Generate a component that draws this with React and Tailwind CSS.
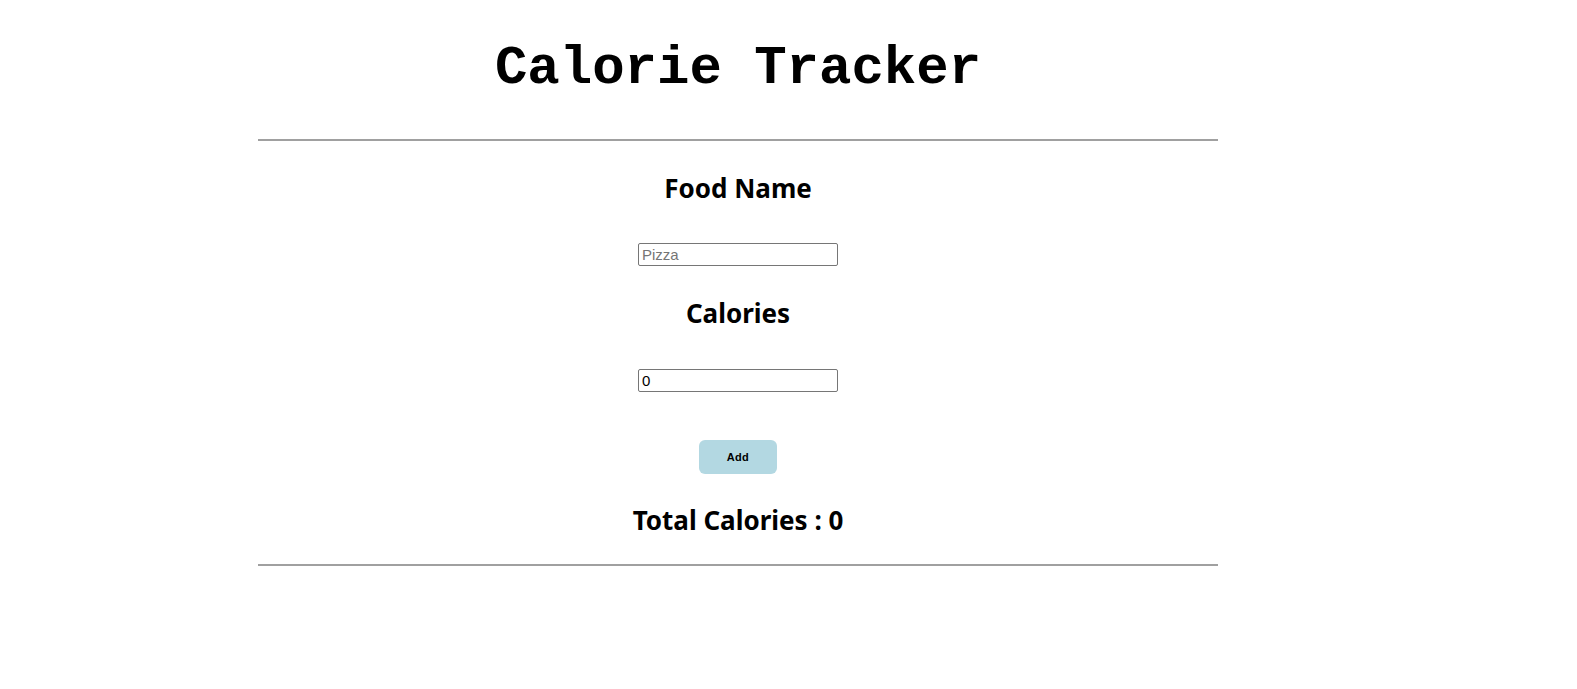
import { useState } from 'react';

export default function App() {
    const [food, setFood] = useState('');
    const [cal, setCal] = useState(0);
    const [total, setTotal] = useState(0);

    const add = () => {
        setTotal(total + Number(cal || 0));
        setFood('');
        setCal(0);
    };

    return (
        <div className="bg-white min-h-[689px] text-black">
            <div className="ml-[258px] w-[960px] flex flex-col items-center">
                {/* Title */}
                <h1 className="mt-[42px] h-[54px] text-[54px] leading-[54px] font-bold font-['Liberation_Mono','Courier_New',monospace]">
                    Calorie Tracker
                </h1>
                <div className="w-full mt-[43px] border-t-2 border-[#a0a0a0]" />

                <h2 className="mt-[31px] text-[26px] leading-[32px] font-bold font-['Noto_Sans',sans-serif]">Food Name</h2>
                <input
                    value={food}
                    onChange={e => setFood(e.target.value)}
                    placeholder="Pizza"
                    className="mt-[39px] w-[200px] h-[23px] px-[3px] border border-[#767676] rounded-[2px] text-[15px] font-['Liberation_Sans',Arial,sans-serif] placeholder:text-[#757575] outline-none"
                />

                <h2 className="mt-[31px] text-[26px] leading-[32px] font-bold font-['Noto_Sans',sans-serif]">Calories</h2>
                <input
                    type="number"
                    value={cal}
                    onChange={e => setCal(e.target.value)}
                    className="mt-[40px] w-[200px] h-[23px] px-[3px] border border-[#767676] rounded-[2px] text-[15px] font-['Liberation_Sans',Arial,sans-serif] outline-none"
                />

                <button
                    onClick={add}
                    className="mt-[48px] w-[78px] h-[34px] rounded-[6px] bg-[#b3d8e2] text-[11px] font-bold font-['Liberation_Sans',Arial,sans-serif] tracking-[0.3px]"
                >
                    Add
                </button>

                <h2 className="mt-[30px] text-[26px] leading-[32px] font-bold font-['Noto_Sans',sans-serif]">Total Calories : {total}</h2>
                <div className="w-full mt-[28px] border-t-2 border-[#a0a0a0]" />
            </div>
        </div>
    );
}
